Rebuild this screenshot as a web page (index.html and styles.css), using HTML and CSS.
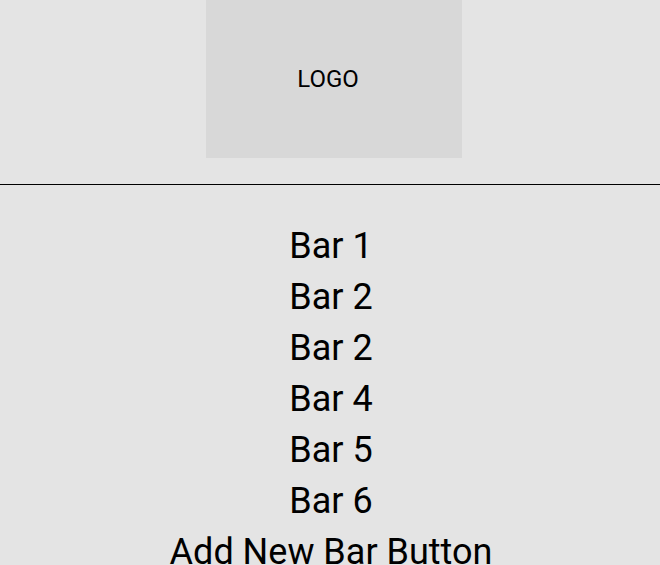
FILE: index.html
```html
<!DOCTYPE html>
<html>
<head>
<meta charset="utf-8">
<link rel="stylesheet" href="styles.css">
</head>
<body>
<header class="header">
  <div class="logo"><span class="logo-text">LOGO</span></div>
</header>
<ul class="bars">
  <li class="bar">Bar 1</li>
  <li class="bar">Bar 2</li>
  <li class="bar">Bar 2</li>
  <li class="bar">Bar 4</li>
  <li class="bar">Bar 5</li>
  <li class="bar">Bar 6</li>
  <li class="bar">Add New Bar Button</li>
</ul>
</body>
</html>
```
FILE: styles.css
```css
html, body {
  margin: 0;
  padding: 0;
  background: #e4e4e4;
  font-family: Roboto, "Liberation Sans", sans-serif;
  color: #000;
  overflow: hidden;
  height: 565px;
}
.header {
  height: 184px;
  border-bottom: 1px solid #000;
  display: flex;
  justify-content: center;
  align-items: flex-start;
}
.logo {
  width: 256px;
  height: 158px;
  margin-left: 8px;
  background: #d8d8d8;
  display: flex;
  align-items: center;
  justify-content: center;
  padding-right: 12px;
  box-sizing: border-box;
}
.logo-text {
  font-size: 24px;
  line-height: 1;
}
.bars {
  list-style: none;
  margin: 0;
  padding: 36px 0 0 2px;
  display: flex;
  flex-direction: column;
  align-items: center;
}
.bar {
  font-size: 36px;
  line-height: 51px;
  white-space: nowrap;
}
```
